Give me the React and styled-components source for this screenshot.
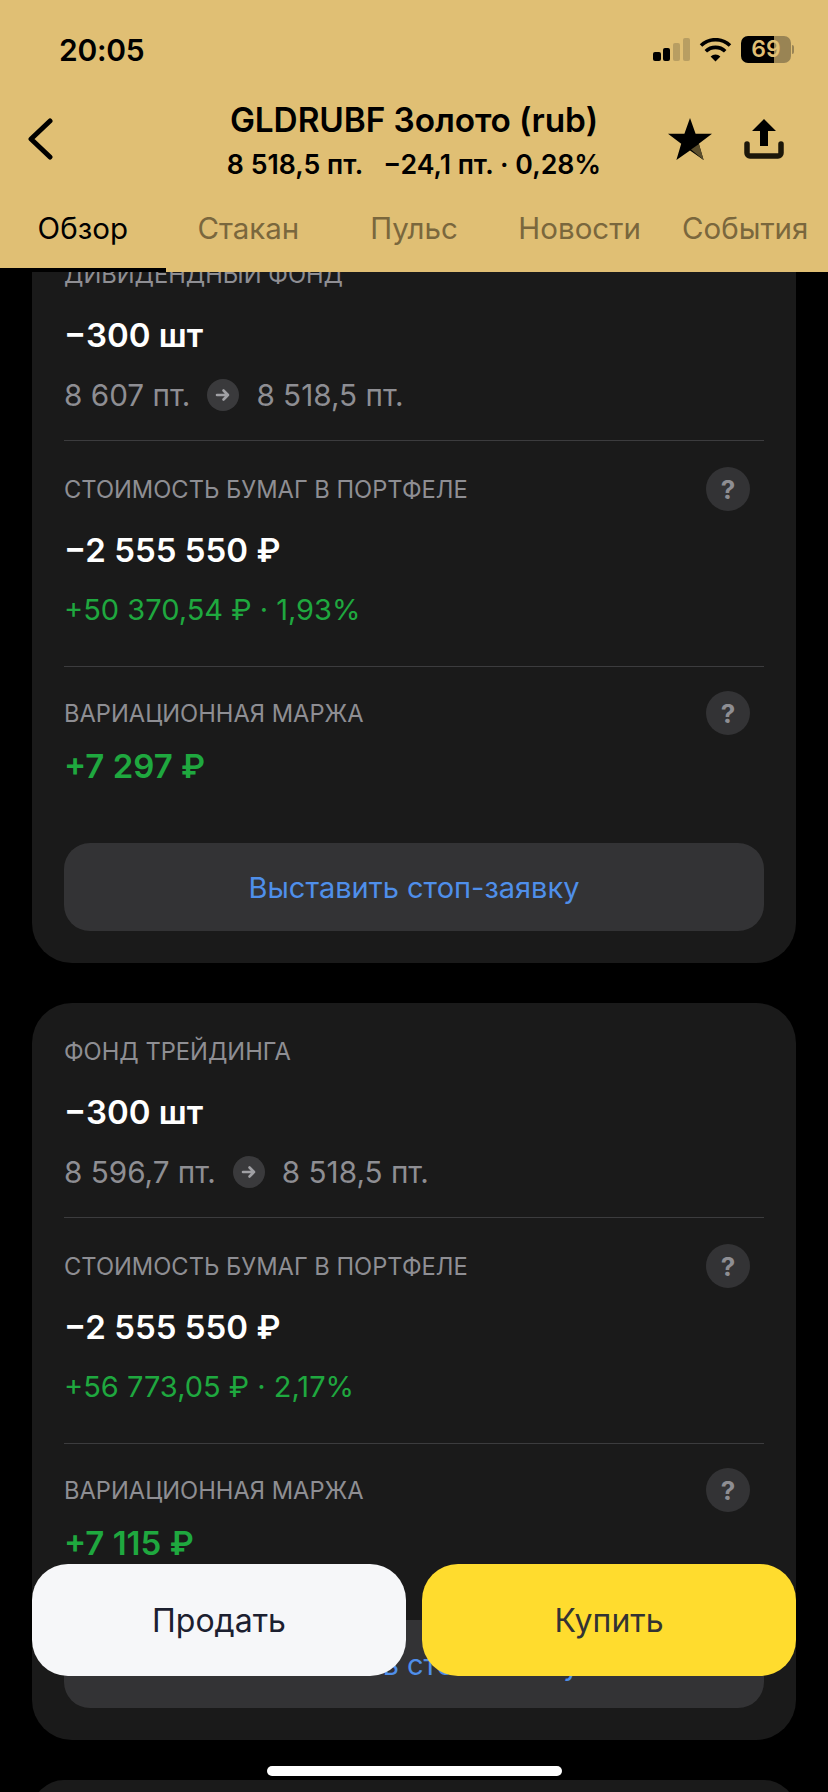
import React from "react";
import styled, { createGlobalStyle } from "styled-components";

const Global = createGlobalStyle`
  html, body { margin: 0; padding: 0; background: #000; }
  body { font-family: Inter, "Liberation Sans", sans-serif; -webkit-font-smoothing: antialiased; }
`;

const Screen = styled.div`
  position: relative;
  width: 828px;
  height: 1792px;
  overflow: hidden;
  background: #000;
  display: flex;
  flex-direction: column;
`;

const Header = styled.header`
  position: relative;
  z-index: 2;
  flex: none;
  height: 272px;
  background: #e0bf74;
  color: #000;
  display: flex;
  flex-direction: column;
`;

const StatusBar = styled.div`
  height: 96px;
  box-sizing: border-box;
  padding: 3px 34px 0 59px;
  flex: none;
  display: flex;
  align-items: center;
  justify-content: space-between;
`;

const Clock = styled.div`
  font-size: 30px;
  font-weight: 600;
  letter-spacing: -0.3px;
`;

const StatusIcons = styled.div`
  display: flex;
  align-items: center;
  gap: 9px;
`;

const Battery = styled.div`
  width: 50px;
  height: 27px;
  border-radius: 7px;
  background: linear-gradient(90deg, #000 0 66%, #998454 66% 100%);
  color: #e0bf74;
  font-size: 23px;
  font-weight: 600;
  line-height: 27px;
  text-align: center;
`;

const BatteryWrap = styled.div`
  display: flex;
  align-items: center;
  gap: 1px;
`;

const BatteryCap = styled.div`
  width: 2px;
  height: 9px;
  border-radius: 0 3px 3px 0;
  background: #998454;
`;

const NavBar = styled.div`
  height: 92px;
  flex: none;
  display: grid;
  grid-template-columns: 1fr auto 1fr;
  align-items: center;
  padding: 0 44px 0 27px;
`;

const BackSlot = styled.div`
  display: flex;
  margin-top: -6px;
`;

const TitleBlock = styled.div`
  text-align: center;
  white-space: nowrap;
  margin: -4px 0 0 17px;
`;

const Title = styled.div`
  font-size: 33.400px;
  font-weight: 600;
  line-height: 40px;
  letter-spacing: -0.1px;
`;

const Subtitle = styled.div`
  display: flex;
  justify-content: center;
  gap: 20px;
  font-size: 26.700px;
  font-weight: 600;
  line-height: 32px;
  margin-top: 8px;
`;

const NavIcons = styled.div`
  display: flex;
  align-items: center;
  justify-content: flex-end;
  gap: 32px;
  margin-top: -6px;
`;

const Tabs = styled.nav`
  flex: 1;
  display: grid;
  grid-template-columns: repeat(5, 1fr);
`;

const Tab = styled.div`
  display: flex;
  align-items: center;
  justify-content: center;
  font-size: 29.500px;
  white-space: nowrap;
  color: ${(p) => (p.$active ? "#000" : "#7a673d")};
  border-bottom: 4px solid ${(p) => (p.$active ? "#000" : "transparent")};
`;

const Scroller = styled.main`
  flex: 1;
  min-height: 0;
  overflow: hidden;
`;

/* The list is scrolled: its first card starts 46px above the scroller's top edge. */
const CardList = styled.div`
  margin: -46px 32px 0;
  display: flex;
  flex-direction: column;
  gap: 40px;
`;

const Card = styled.section`
  background: #1a1a1a;
  border-radius: 40px;
  padding: 32px;
  display: flex;
  flex-direction: column;
`;

const Section = styled.div`
  display: flex;
  flex-direction: column;
`;

const DividedSection = styled(Section)`
  border-top: 1px solid #3c3c3e;
  margin-top: ${(p) => p.$gap}px;
  padding-top: ${(p) => p.$pad}px;
`;

const LabelRow = styled.div`
  display: flex;
  align-items: center;
  justify-content: space-between;
  height: 32px;
  padding-right: 14px;
`;

const Label = styled.div`
  font-size: 23.700px;
  color: #8e8e93;
  text-transform: uppercase;
`;

const Help = styled.div`
  width: 44px;
  height: 44px;
  border-radius: 50%;
  background: #333335;
  color: #8e8e93;
  font-size: 26px;
  font-weight: 700;
  display: flex;
  align-items: center;
  justify-content: center;
`;

const Amount = styled.div`
  font-size: 33px;
  font-weight: 600;
  line-height: 40px;
  margin-top: ${(p) => (p.$green ? 17 : 25)}px;
  color: ${(p) => (p.$green ? "#1fa83f" : "#fff")};
`;

const Detail = styled.div`
  display: flex;
  align-items: center;
  gap: 17px;
  font-size: ${(p) => (p.$green ? 29 : 29.7)}px;
  line-height: 40px;
  margin-top: 20px;
  color: ${(p) => (p.$green ? "#1fa83f" : "#8e8e93")};
`;

const ArrowDot = styled.div`
  width: 32px;
  height: 32px;
  border-radius: 50%;
  background: #3a3a3c;
  display: flex;
  align-items: center;
  justify-content: center;
`;

const StopButton = styled.div`
  height: 88px;
  margin-top: 57px;
  border-radius: 26px;
  background: #333335;
  color: #4f8fea;
  font-size: 29px;
  display: flex;
  align-items: center;
  justify-content: center;
`;

const ActionBar = styled.div`
  position: absolute;
  z-index: 3;
  left: 32px;
  right: 32px;
  top: 1564px;
  display: grid;
  grid-template-columns: 1fr 1fr;
  gap: 16px;
`;

const ActionButton = styled.div`
  height: 112px;
  border-radius: 36px;
  background: ${(p) => (p.$buy ? "#ffdc2e" : "#f6f7f9")};
  color: ${(p) => (p.$buy ? "#333" : "#1c2030")};
  font-size: 32px;
  display: flex;
  align-items: center;
  justify-content: center;
`;

const HomeIndicator = styled.div`
  position: absolute;
  z-index: 3;
  left: 267px;
  top: 1766px;
  width: 295px;
  height: 10px;
  border-radius: 5px;
  background: #fff;
`;

const SignalIcon = () => (
  <svg width="37" height="23" viewBox="0 0 37 23">
    <rect x="0" y="14" width="8" height="9" rx="2" fill="#000" />
    <rect x="10" y="10" width="7" height="13" rx="2" fill="#000" />
    <rect x="20" y="5" width="7" height="18" rx="2" fill="#b89e62" />
    <rect x="30" y="0" width="7" height="23" rx="2" fill="#b89e62" />
  </svg>
);

const WifiIcon = () => (
  <svg width="33" height="24" viewBox="0 0 33 24">
    <path d="M16.500 23.500 11.600 18.500a7 7 0 0 1 9.800 0z" fill="#000" />
    <path d="M6.800 13.300a14 14 0 0 1 19.400 0" fill="none" stroke="#000" strokeWidth="3.600" />
    <path d="M2 7.500a21 21 0 0 1 29 0" fill="none" stroke="#000" strokeWidth="3.600" />
  </svg>
);

const BackIcon = () => (
  <svg width="26" height="42" viewBox="0 0 26 42">
    <path d="M23 3 4 21l19 18" fill="none" stroke="#000" strokeWidth="5" strokeLinecap="round" strokeLinejoin="round" />
  </svg>
);

const StarIcon = () => (
  <svg width="44" height="42" viewBox="0 0 44 42">
    <path d="M22 0l5.600 15.800H44L30.800 25.800 35.600 42 22 32.400 8.400 42l4.800-16.200L0 15.800h16.400z" fill="#000" />
    <path d="M23 31.600 35.600 42 31 26z" fill="#5c4e2c" />
  </svg>
);

const ShareIcon = () => (
  <svg width="40" height="40" viewBox="0 0 40 40">
    <path d="M20 0 32 12H24V27H16V12H8z" fill="#000" />
    <path d="M3 25v9a3 3 0 0 0 3 3h28a3 3 0 0 0 3-3v-9" fill="none" stroke="#1c170a" strokeWidth="5.500" strokeLinecap="round" />
  </svg>
);

const ArrowIcon = () => (
  <svg width="16" height="14" viewBox="0 0 16 14">
    <path d="M2 7h11M8.500 2.500 13 7l-4.500 4.500" fill="none" stroke="#a0a0a4" strokeWidth="2.600" strokeLinecap="round" strokeLinejoin="round" />
  </svg>
);

const positions = [
  { fund: "Дивидендный фонд", from: "8 607 пт.", to: "8 518,5 пт.", pnl: "+50 370,54 ₽ · 1,93%", margin: "+7 297 ₽" },
  { fund: "Фонд трейдинга", from: "8 596,7 пт.", to: "8 518,5 пт.", pnl: "+56 773,05 ₽ · 2,17%", margin: "+7 115 ₽" },
];

const tabs = ["Обзор", "Стакан", "Пульс", "Новости", "События"];

export default function App() {
  return (
    <Screen>
      <Global />
      <Header>
        <StatusBar>
          <Clock>20:05</Clock>
          <StatusIcons>
            <SignalIcon />
            <WifiIcon />
            <BatteryWrap>
              <Battery>69</Battery>
              <BatteryCap />
            </BatteryWrap>
          </StatusIcons>
        </StatusBar>
        <NavBar>
          <BackSlot><BackIcon /></BackSlot>
          <TitleBlock>
            <Title>GLDRUBF Золото (rub)</Title>
            <Subtitle>
              <span>8 518,5 пт.</span>
              <span>−24,1 пт. · 0,28%</span>
            </Subtitle>
          </TitleBlock>
          <NavIcons>
            <StarIcon />
            <ShareIcon />
          </NavIcons>
        </NavBar>
        <Tabs>
          {tabs.map((t, i) => (
            <Tab key={t} $active={i === 0}>{t}</Tab>
          ))}
        </Tabs>
      </Header>
      <Scroller>
        <CardList>
          {positions.map((p) => (
            <Card key={p.fund}>
              <Section>
                <LabelRow><Label>{p.fund}</Label></LabelRow>
                <Amount>−300 шт</Amount>
                <Detail>
                  <span>{p.from}</span>
                  <ArrowDot><ArrowIcon /></ArrowDot>
                  <span>{p.to}</span>
                </Detail>
              </Section>
              <DividedSection $gap={25} $pad={32}>
                <LabelRow><Label>Стоимость бумаг в портфеле</Label><Help>?</Help></LabelRow>
                <Amount>−2 555 550 ₽</Amount>
                <Detail $green>{p.pnl}</Detail>
              </DividedSection>
              <DividedSection $gap={36} $pad={30}>
                <LabelRow><Label>Вариационная маржа</Label><Help>?</Help></LabelRow>
                <Amount $green>{p.margin}</Amount>
              </DividedSection>
              <StopButton>Выставить стоп-заявку</StopButton>
            </Card>
          ))}
          <Card />
        </CardList>
      </Scroller>
      <ActionBar>
        <ActionButton>Продать</ActionButton>
        <ActionButton $buy>Купить</ActionButton>
      </ActionBar>
      <HomeIndicator />
    </Screen>
  );
}
